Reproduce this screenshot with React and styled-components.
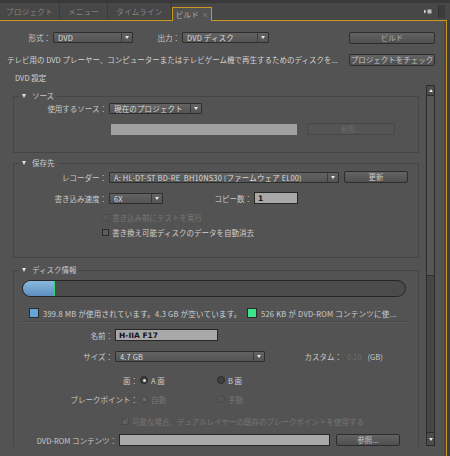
import styled, { createGlobalStyle, css } from 'styled-components';

const ORANGE = '#c99a22';

const GlobalStyle = createGlobalStyle`
  html, body {
    margin: 0;
    padding: 0;
    background: #535353;
  }
  body {
    font-family: "Noto Sans CJK JP", "Noto Sans", sans-serif;
    font-size: 7.5px;
    color: #cdcdcd;
  }
  * { box-sizing: border-box; }
`

const Frame = styled.div`
    width: 450px;
    height: 456px;
    overflow: hidden;
    display: flex;
    flex-direction: column;
    background: #535353;
`

const TopStrip = styled.div`
    height: 3px;
    flex: none;
    background: #393939;
`

const TabBar = styled.div`
    height: 17px;
    flex: none;
    display: flex;
    align-items: stretch;
    background: #474747;
    position: relative;
    z-index: 1;
`

const Tab = styled.div`
    width: ${p => p.$w}px;
    flex: none;
    display: flex;
    align-items: center;
    justify-content: center;
    white-space: nowrap;
    letter-spacing: 0.3px;
    color: #858585;
    border-right: 1px solid #3a3a3a;
    ${p => p.$active && css`
        color: #b0b0b0;
        background: #535353;
        border: 1px solid ${ORANGE};
        border-bottom: none;
        margin-top: 4px;
        margin-bottom: -1px;
    `}
`

const CloseMark = styled.span`
    font-size: 6px;
    margin-left: 3px;
    color: #9a9a9a;
`

const PanelMenu = styled.div`
    margin-left: auto;
    display: flex;
    align-items: center;
    margin-right: 6px;
`

const OverflowBox = styled.div`
    width: 7px;
    margin: 2px 5px 2px 0;
    background: #3c3c3c;
    border-left: 1px solid #333;
`

const Lower = styled.div`
    flex: 1;
    display: flex;
    min-height: 0;
`

const Body = styled.div`
    width: 447px;
    flex: none;
    border-top: 1px solid ${ORANGE};
    border-right: 1px solid ${ORANGE};
    box-shadow: inset -2px 0 0 #484848;
    display: flex;
    flex-direction: column;
`

const RightStrip = styled.div`
    flex: 1;
    background: #3d3d3d;
`

const TopRow = styled.div`
    display: flex;
    align-items: center;
    height: 11px;
    margin-top: ${p => p.$mt}px;
    padding-left: ${p => p.$pl || 0}px;
    padding-right: 11px;
`

const Spacer = styled.div`
    flex: 1;
`

const Description = styled.div`
    flex: 1;
    min-width: 0;
    white-space: nowrap;
    overflow: hidden;
    text-overflow: ellipsis;
    color: #d2d2d2;
`

const SectionTitle = styled.div`
    margin-top: 8px;
    padding-left: 15px;
    line-height: 10px;
    height: 10px;
    color: #d2d2d2;
`

const ScrollArea = styled.div`
    margin-top: 2px;
    height: 362px;
    flex: none;
    display: flex;
    gap: 7px;
    padding-left: 13px;
`

const ScrollContent = styled.div`
    width: 406px;
    flex: none;
    height: 100%;
    overflow: hidden;
    padding-top: 6px;
`

const Group = styled.fieldset`
    margin: ${p => p.$mt || 0}px 0 0 0;
    padding: 0 0 ${p => p.$pb}px 0;
    border: 1px solid #454545;
    min-width: 0;
`

const Legend = styled.legend`
    padding: 0 3px;
    margin-left: 5px;
    line-height: 10px;
    color: #cacaca;
`

const Caret = styled.span`
    display: inline-block;
    vertical-align: middle;
    margin: -1px 6px 0 0;
    border-left: 2.5px solid transparent;
    border-right: 2.5px solid transparent;
    border-top: 4px solid #e0e0e0;
`

const Row = styled.div`
    display: flex;
    align-items: center;
    height: 12px;
    margin-top: ${p => p.$mt || 0}px;
    padding-left: ${p => p.$pl || 0}px;
`

const Label = styled.div`
    width: ${p => p.$w}px;
    flex: none;
    text-align: right;
    padding-right: 2px;
    white-space: nowrap;
    color: #c9c9c9;
`

const SelectBox = styled.div`
    width: ${p => p.$w}px;
    height: 11px;
    flex: none;
    display: flex;
    align-items: center;
    padding-left: 4px;
    background: linear-gradient(#626262, #545454);
    border: 1px solid #2e2e2e;
    border-radius: 1px;
    color: #dcdcdc;
    white-space: nowrap;
    overflow: hidden;
`

const SelectText = styled.span`
    flex: 1;
    overflow: hidden;
    letter-spacing: 0.15px;
`

const SelectArrow = styled.span`
    width: 11px;
    height: 100%;
    flex: none;
    display: flex;
    align-items: center;
    justify-content: center;
    border-left: 1px solid #3a3a3a;
    &::after {
        content: '';
        border-left: 2.5px solid transparent;
        border-right: 2.5px solid transparent;
        border-top: 3px solid #e8e8e8;
    }
`

const Button = styled.button`
    width: ${p => p.$w}px;
    height: 12px;
    flex: none;
    margin-left: ${p => p.$ml || 0}px;
    padding: 0;
    font: inherit;
    line-height: 1;
    white-space: nowrap;
    color: ${p => p.disabled ? '#6c6c6c' : p.$dim ? '#adadad' : '#c6c6c6'};
    background: ${p => p.disabled ? '#545454' : 'linear-gradient(#636363, #4f4f4f)'};
    border: 1px solid ${p => p.disabled ? '#474747' : '#2d2d2d'};
    border-radius: 2px;
`

const TextField = styled.input`
    width: ${p => p.$w}px;
    height: ${p => p.$flat ? 11 : 12}px;
    flex: none;
    padding: 0 3px;
    font-family: "DejaVu Sans", "Noto Sans CJK JP", sans-serif;
    font-size: 7.5px;
    font-weight: bold;
    color: #161616;
    background: ${p => p.$flat ? '#a0a0a0' : '#a8a8a8'};
    border: ${p => p.$flat ? 'none' : '1px solid #262626'};
    outline: none;
`

const Check = styled.span`
    width: 7px;
    height: 7px;
    flex: none;
    display: flex;
    align-items: center;
    justify-content: center;
    font-size: 8px;
    line-height: 1;
    color: #7c7c7c;
    border: 1px solid ${p => p.$disabled ? '#4a4a4a' : '#2a2a2a'};
    background: ${p => p.$disabled ? '#575757' : '#5d5d5d'};
`

const OptionText = styled.span`
    margin-left: 3px;
    white-space: nowrap;
    color: ${p => p.$disabled ? '#767676' : '#d0d0d0'};
`

const RadioOption = styled.div`
    width: ${p => p.$w ? `${p.$w}px` : 'auto'};
    flex: none;
    display: flex;
    align-items: center;
`

const Radio = styled.span`
    width: 8px;
    height: 8px;
    flex: none;
    border-radius: 50%;
    display: flex;
    align-items: center;
    justify-content: center;
    border: 1px solid ${p => p.$disabled ? '#4a4a4a' : '#2a2a2a'};
    background: ${p => p.$disabled ? '#575757' : '#3f3f3f'};
    &::after {
        content: '';
        width: 3px;
        height: 3px;
        border-radius: 50%;
        background: ${p => !p.$checked ? 'transparent' : p.$disabled ? '#6e6e6e' : '#e4e4e4'};
    }
`

const DiskBar = styled.div`
    margin: 5px 0 0 8px;
    width: 384px;
    height: 17px;
    display: flex;
    border-radius: 9px;
    border: 1.5px solid #252525;
    background: #4b4b4b;
    overflow: hidden;
`

const DiskFill = styled.div`
    height: 100%;
    background: linear-gradient(#8ab9de, #5b8fbe);
    border-right: 1px solid #3fcf78;
`

const LegendItem = styled.div`
    width: ${p => p.$w ? `${p.$w}px` : 'auto'};
    flex: none;
    display: flex;
    align-items: center;
    white-space: nowrap;
    letter-spacing: 0.25px;
    color: #d0d0d0;
`

const Swatch = styled.span`
    width: 10px;
    height: 10px;
    flex: none;
    margin-right: 4px;
    background: ${p => p.$color};
    border: 1px solid #2a2a2a;
`

const Divider = styled.div`
    margin: 2px 0 0 6px;
    width: 386px;
    height: 1px;
    background: #484848;
    border-bottom: 1px solid #5a5a5a;
    box-sizing: content-box;
`

const DimValue = styled.span`
    padding: 0 3px;
    color: #6e6e6e;
`

const Unit = styled.span`
    margin-left: 3px;
    color: #c9c9c9;
`

const ScrollBar = styled.div`
    width: 9px;
    height: 361px;
    flex: none;
    display: flex;
    flex-direction: column;
    border: 1px solid #2c2c2c;
    background: #464646;
`

const ScrollArrow = styled.div`
    height: ${p => p.$h}px;
    flex: none;
    display: flex;
    align-items: center;
    justify-content: center;
    background: #4c4c4c;
    &::after {
        content: '';
        border-left: 2px solid transparent;
        border-right: 2px solid transparent;
        ${p => p.$down ? 'border-top' : 'border-bottom'}: 3px solid #ececec;
    }
`

const Thumb = styled.div`
    height: 181px;
    flex: none;
    background: #575757;
    border-top: 1px solid #2e2e2e;
    border-bottom: 1px solid #2e2e2e;
`

const Track = styled.div`
    flex: 1;
    border-bottom: 1px solid #2e2e2e;
`

function Select({ w, children }) {
    return (
        <SelectBox $w={w}>
            <SelectText>{children}</SelectText>
            <SelectArrow />
        </SelectBox>
    )
}

function Section({ title, mt, pb, children }) {
    return (
        <Group $mt={mt} $pb={pb}>
            <Legend><Caret />{title}</Legend>
            {children}
        </Group>
    )
}

const disk = { capacityMB: 4700, usedMB: 399.8 }

export default function App() {
    const usedPct = (disk.usedMB / disk.capacityMB) * 100

    return (
        <Frame>
            <GlobalStyle />
            <TopStrip />
            <TabBar>
                <Tab $w={60}>プロジェクト</Tab>
                <Tab $w={48}>メニュー</Tab>
                <Tab $w={64}>タイムライン</Tab>
                <Tab $w={40} $active>ビルド<CloseMark>×</CloseMark></Tab>
                <PanelMenu>
                    <svg width="8" height="5" viewBox="0 0 8 5">
                        <path d="M0 0.5 L2.5 2.5 L0 4.5 Z" fill="#cfcfcf" />
                        <rect x="3.5" y="0.5" width="4" height="4" fill="#bdbdbd" />
                    </svg>
                </PanelMenu>
                <OverflowBox />
            </TabBar>
            <Lower>
                <Body>
                    <TopRow $mt={11}>
                        <Label $w={53}>形式：</Label>
                        <Select w={80}>DVD</Select>
                        <Label $w={49}>出力：</Label>
                        <Select w={87}>DVD ディスク</Select>
                        <Spacer />
                        <Button $w={86} $dim>ビルド</Button>
                    </TopRow>
                    <TopRow $mt={11} $pl={7}>
                        <Description>テレビ用の DVD プレーヤー、コンピューターまたはテレビゲーム機で再生するためのディスクを...</Description>
                        <Button $w={86}>プロジェクトをチェック</Button>
                    </TopRow>
                    <SectionTitle>DVD 設定</SectionTitle>
                    <ScrollArea>
                        <ScrollContent>
                            <Section title="ソース" pb={17}>
                                <Row $mt={1}>
                                    <Label $w={95}>使用するソース：</Label>
                                    <Select w={93}>現在のプロジェクト</Select>
                                </Row>
                                <Row $mt={9} $pl={97}>
                                    <TextField $w={186} $flat readOnly value="" />
                                    <Button $w={88} $ml={10} disabled>参照...</Button>
                                </Row>
                            </Section>

                            <Section title="保存先" mt={5} pb={19}>
                                <Row $mt={3}>
                                    <Label $w={95}>レコーダー：</Label>
                                    <Select w={230}>A: HL-DT-ST BD-RE&nbsp; BH10NS30 (ファームウェア EL00)</Select>
                                    <Button $w={64} $ml={5}>更新</Button>
                                </Row>
                                <Row $mt={9}>
                                    <Label $w={95}>書き込み速度：</Label>
                                    <Select w={54}>6X</Select>
                                    <Label $w={91}>コピー数：</Label>
                                    <TextField $w={44} readOnly value="1" />
                                </Row>
                                <Row $mt={7} $pl={88}>
                                    <Check $disabled />
                                    <OptionText $disabled>書き込み前にテストを実行</OptionText>
                                </Row>
                                <Row $mt={3} $pl={88}>
                                    <Check />
                                    <OptionText>書き換え可能ディスクのデータを自動消去</OptionText>
                                </Row>
                            </Section>

                            <Section title="ディスク情報" mt={7} pb={20}>
                                <DiskBar>
                                    <DiskFill style={{ width: `${usedPct}%` }} />
                                </DiskBar>
                                <Row $mt={10} $pl={15}>
                                    <LegendItem $w={218}>
                                        <Swatch $color="#62a6dc" />
                                        399.8 MB が使用されています。4.3 GB が空いています。
                                    </LegendItem>
                                    <LegendItem>
                                        <Swatch $color="#3fe28c" />
                                        526 KB が DVD-ROM コンテンツに使...
                                    </LegendItem>
                                </Row>
                                <Divider />
                                <Row $mt={6}>
                                    <Label $w={101}>名前：</Label>
                                    <TextField $w={103} readOnly value="H-IIA F17" />
                                </Row>
                                <Row $mt={9}>
                                    <Label $w={101}>サイズ：</Label>
                                    <Select w={150}>4.7 GB</Select>
                                    <Label $w={79}>カスタム：</Label>
                                    <DimValue>0.10</DimValue>
                                    <Unit>(GB)</Unit>
                                </Row>
                                <Row $mt={12}>
                                    <Label $w={126}>面：</Label>
                                    <RadioOption $w={77}>
                                        <Radio $checked />
                                        <OptionText>A 面</OptionText>
                                    </RadioOption>
                                    <RadioOption>
                                        <Radio />
                                        <OptionText>B 面</OptionText>
                                    </RadioOption>
                                </Row>
                                <Row $mt={7}>
                                    <Label $w={126}>ブレークポイント：</Label>
                                    <RadioOption $w={77}>
                                        <Radio $checked $disabled />
                                        <OptionText $disabled>自動</OptionText>
                                    </RadioOption>
                                    <RadioOption>
                                        <Radio $disabled />
                                        <OptionText $disabled>手動</OptionText>
                                    </RadioOption>
                                </Row>
                                <Row $mt={10} $pl={108}>
                                    <Check $disabled>✓</Check>
                                    <OptionText $disabled>可能な場合、デュアルレイヤーの既存のブレークポイントを使用する</OptionText>
                                </Row>
                                <Row $mt={7}>
                                    <Label $w={105}>DVD-ROM コンテンツ：</Label>
                                    <TextField $w={211} readOnly value="" />
                                    <Button $w={64} $ml={6}>参照...</Button>
                                </Row>
                            </Section>
                        </ScrollContent>
                        <ScrollBar>
                            <ScrollArrow $h={9} />
                            <Thumb />
                            <Track />
                            <ScrollArrow $h={12} $down />
                        </ScrollBar>
                    </ScrollArea>
                </Body>
                <RightStrip />
            </Lower>
        </Frame>
    )
}
